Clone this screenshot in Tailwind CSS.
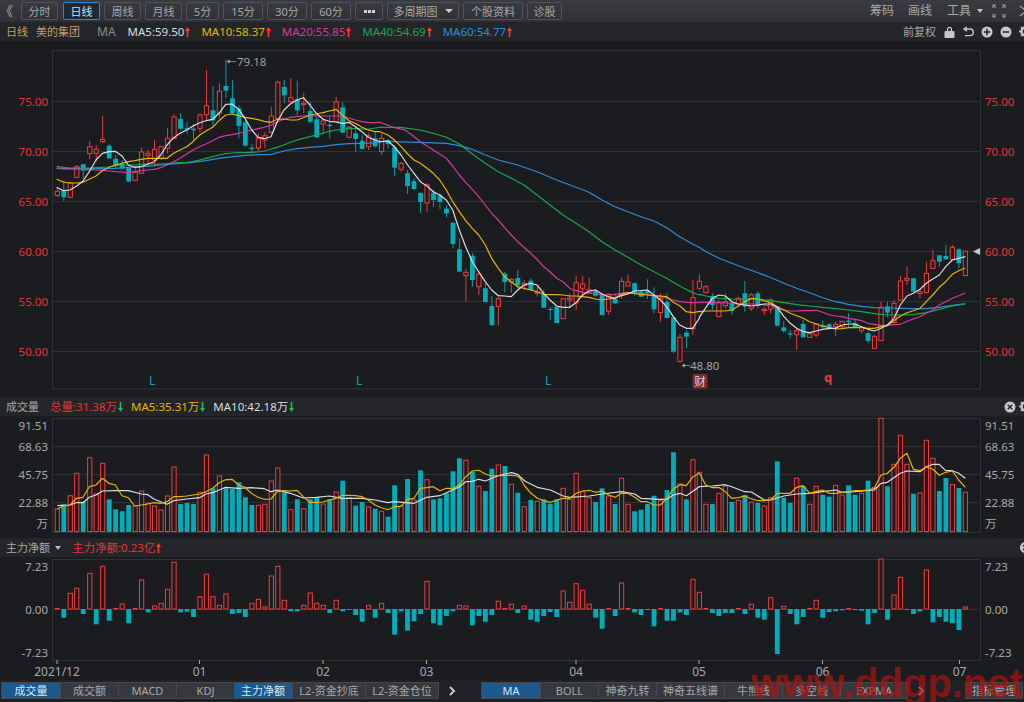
<!DOCTYPE html>
<html lang="zh">
<head>
<meta charset="utf-8">
<script src="https://cdn.jsdelivr.net/npm/@tailwindcss/browser@4"></script>
</head>
<body class="bg-[#1b1c20]">
<div class="relative w-[1024px] h-[702px] overflow-hidden flex flex-col bg-[#1b1c20] text-[#a8a8a8] text-[11px] leading-none font-['Noto_Sans','Noto_Sans_CJK_SC',sans-serif]">

  <!-- toolbar -->
  <div class="h-[22px] shrink-0 flex items-center justify-between bg-gradient-to-b from-[#3a3c41] to-[#2f3135] overflow-hidden">
    <div class="flex items-center">
      <span class="w-[21px] text-left text-[13px] text-[#b0b0b0]">《</span>
      <div class="flex gap-[4px]">
        <span class="w-[37px] h-[18px] flex items-center justify-center border border-[#505257] rounded-[2px]">分时</span>
        <span class="w-[37px] h-[18px] flex items-center justify-center border border-[#2b8ad6] rounded-[2px] bg-[#1d2a36] text-[#bfe0f8] ml-[1px]">日线</span>
        <span class="w-[37px] h-[18px] flex items-center justify-center border border-[#505257] rounded-[2px]">周线</span>
        <span class="w-[37px] h-[18px] flex items-center justify-center border border-[#505257] rounded-[2px]">月线</span>
        <span class="w-[33px] h-[18px] flex items-center justify-center border border-[#505257] rounded-[2px]">5分</span>
        <span class="w-[40px] h-[18px] flex items-center justify-center border border-[#505257] rounded-[2px]">15分</span>
        <span class="w-[40px] h-[18px] flex items-center justify-center border border-[#505257] rounded-[2px]">30分</span>
        <span class="w-[40px] h-[18px] flex items-center justify-center border border-[#505257] rounded-[2px]">60分</span>
        <span class="w-[28px] h-[18px] flex items-center justify-center gap-[1px] border border-[#505257] rounded-[2px]">
          <i class="w-[3px] h-[3px] bg-[#d0d0d0]"></i><i class="w-[3px] h-[3px] bg-[#d0d0d0]"></i><i class="w-[3px] h-[3px] bg-[#d0d0d0]"></i>
        </span>
        <span class="w-[72px] h-[18px] flex items-center justify-center gap-[7px] border border-[#505257] rounded-[2px]">多周期图
          <i class="w-0 h-0 border-x-[4px] border-x-transparent border-t-[4px] border-t-[#c8c8c8]"></i>
        </span>
        <span class="w-[60px] h-[18px] flex items-center justify-center border border-[#505257] rounded-[2px]">个股资料</span>
        <span class="w-[35px] h-[18px] flex items-center justify-center border border-[#505257] rounded-[2px]">诊股</span>
      </div>
    </div>
    <div class="flex items-center -mr-[7px] text-[12px]">
      <span>筹码</span>
      <span class="ml-[14px]">画线</span>
      <span class="ml-[15px]">工具</span>
      <i class="ml-[6px] w-0 h-0 border-x-[3.5px] border-x-transparent border-t-[4px] border-t-[#c0c0c0]"></i>
      <svg class="ml-[9px]" width="14" height="14" viewBox="0 0 14 14" fill="none" stroke="#a8a8a8" stroke-width="1"><path d="M1 4V1h3M1 1l3 3M13 4V1h-3M13 1l-3 3M1 10v3h3M1 13l3-3M13 10v3h-3M13 13l-3-3"/></svg>
      <svg class="ml-[13px]" width="12" height="14" viewBox="0 0 12 14" fill="none" stroke="#a8a8a8" stroke-width="1.2"><path d="M1 2l6 5-6 5M5 3l6 0"/></svg>
    </div>
  </div>

  <!-- legend row -->
  <div class="h-[19px] shrink-0 flex items-center justify-between bg-[#232529] overflow-hidden">
    <div class="flex items-center pl-[6px]">
      <span class="text-[#c39c68]">日线</span>
      <span class="ml-[8px] text-[#c39c68]">美的集团</span>
      <span class="ml-[17px] text-[12px] text-[#8c8c8c]">MA</span>
      <span class="ml-[12px] text-[11.5px] text-[#d6dde4]">MA5:59.50</span>
      <svg class="ml-[1px]" width="5" height="10" viewBox="0 0 5 10" fill="#ff3b30"><path d="M2.5 0L5 4H3.3V10H1.7V4H0z"/></svg>
      <span class="ml-[11px] text-[11.5px] text-[#e3b505]">MA10:58.37</span>
      <svg class="ml-[1px]" width="5" height="10" viewBox="0 0 5 10" fill="#ff3b30"><path d="M2.5 0L5 4H3.3V10H1.7V4H0z"/></svg>
      <span class="ml-[11px] text-[11.5px] text-[#d6389f]">MA20:55.85</span>
      <svg class="ml-[1px]" width="5" height="10" viewBox="0 0 5 10" fill="#ff3b30"><path d="M2.5 0L5 4H3.3V10H1.7V4H0z"/></svg>
      <span class="ml-[11px] text-[11.5px] text-[#16a84a]">MA40:54.69</span>
      <svg class="ml-[1px]" width="5" height="10" viewBox="0 0 5 10" fill="#ff3b30"><path d="M2.5 0L5 4H3.3V10H1.7V4H0z"/></svg>
      <span class="ml-[11px] text-[11.5px] text-[#2a8de0]">MA60:54.77</span>
      <svg class="ml-[1px]" width="5" height="10" viewBox="0 0 5 10" fill="#ff3b30"><path d="M2.5 0L5 4H3.3V10H1.7V4H0z"/></svg>
    </div>
    <div class="flex items-center -mr-[8px]">
      <span>前复权</span>
      <svg class="ml-[8px]" width="11" height="12" viewBox="0 0 11 12" fill="#c8c8c8"><path d="M3 5V3.2a2.5 2.5 0 0 1 5 0V5H6.8V3.2a1.3 1.3 0 0 0-2.6 0V5z"/><rect x="0.5" y="5" width="10" height="7" rx="1"/></svg>
      <svg class="ml-[8px]" width="11" height="11" viewBox="0 0 11 11" fill="none" stroke="#c8c8c8" stroke-width="1.4"><path d="M4 1L1 3l3 2.2M1.4 3H7a3 3 0 0 1 0 6.6H2"/></svg>
      <svg class="ml-[7px]" width="12" height="12" viewBox="0 0 12 12"><circle cx="6" cy="6" r="5.5" fill="#c8c8c8"/><path d="M2.8 6h6.4M6 2.8v6.4" stroke="#232529" stroke-width="1.5"/></svg>
      <svg class="ml-[7px]" width="12" height="12" viewBox="0 0 12 12"><circle cx="6" cy="6" r="5.5" fill="#c8c8c8"/><path d="M2.8 6h6.4" stroke="#232529" stroke-width="1.5"/></svg>
      <svg class="ml-[7px]" width="13" height="13" viewBox="0 0 13 13"><circle cx="6.5" cy="6.5" r="4" fill="none" stroke="#c8c8c8" stroke-width="2.4"/><path d="M6.5 0v13M0 6.5h13M2 2l9 9M11 2l-9 9" stroke="#c8c8c8" stroke-width="1.6" stroke-dasharray="2 9"/></svg>
    </div>
  </div>

  <!-- main chart -->
  <svg id="main" class="block shrink-0" width="1024" height="356" viewBox="0 41 1024 356" font-size="11.5">
    <rect x="52.5" y="50.5" width="928" height="338.5" fill="none" stroke="#303236"/>
    <g stroke="#2f3135"><path d="M53 101.5H980M53 151.5H980M53 201.5H980M53 251.5H980M53 301.5H980M53 351.5H980"/></g>
    <g id="candles"></g>
    <g id="malines" fill="none" stroke-width="1.2" stroke-linejoin="round"></g>
    <g fill="#e53535" text-anchor="end">
      <text x="48" y="106">75.00</text><text x="48" y="156">70.00</text><text x="48" y="206">65.00</text><text x="48" y="256">60.00</text><text x="48" y="306">55.00</text><text x="48" y="356">50.00</text>
    </g>
    <g fill="#e53535">
      <text x="985" y="106">75.00</text><text x="985" y="156">70.00</text><text x="985" y="206">65.00</text><text x="985" y="256">60.00</text><text x="985" y="306">55.00</text><text x="985" y="356">50.00</text>
    </g>
    <path d="M227 61.5H236M227 61.5l2.5-1.5v3z" stroke="#9a9a9a" fill="#9a9a9a" stroke-width="0.8"/>
    <text x="237" y="66" fill="#a0a0a0">79.18</text>
    <path d="M682 365.5H690M682 365.5l2.5-1.5v3z" stroke="#9a9a9a" fill="#9a9a9a" stroke-width="0.8"/>
    <text x="690" y="370" fill="#a0a0a0">48.80</text>
    <g fill="#10a3ad" font-size="12"><text x="149" y="385">L</text><text x="356" y="385">L</text><text x="545" y="385">L</text></g>
    <rect x="692.5" y="374" width="15" height="14.5" rx="2" fill="#7c2d2d"/>
    <text x="700" y="385.5" text-anchor="middle" fill="#e6cccc" font-size="11.5">财</text>
    <text x="828" y="382" text-anchor="middle" fill="#f03a3a" font-size="13" font-weight="700">q</text>
    <path d="M973 251.5l7-3.5v7z" fill="#c8c8c8"/>
  </svg>

  <!-- volume header -->
  <div class="h-[19px] shrink-0 flex items-center justify-between bg-[#232529] overflow-hidden">
    <div class="flex items-center pl-[6px]">
      <span>成交量</span>
      <span class="ml-[11px] text-[11.5px] text-[#e53535]">总量:31.38万</span>
      <svg class="ml-[1px]" width="5" height="10" viewBox="0 0 5 10" fill="#18c050"><path d="M2.5 10L5 6H3.3V0H1.7V6H0z"/></svg>
      <span class="ml-[8px] text-[11.5px] text-[#e3b505]">MA5:35.31万</span>
      <svg class="ml-[1px]" width="5" height="10" viewBox="0 0 5 10" fill="#18c050"><path d="M2.5 10L5 6H3.3V0H1.7V6H0z"/></svg>
      <span class="ml-[8px] text-[11.5px] text-[#d6dde4]">MA10:42.18万</span>
      <svg class="ml-[1px]" width="5" height="10" viewBox="0 0 5 10" fill="#18c050"><path d="M2.5 10L5 6H3.3V0H1.7V6H0z"/></svg>
    </div>
    <div class="flex items-center -mr-[8px]">
      <svg width="12" height="12" viewBox="0 0 12 12"><circle cx="6" cy="6" r="5.5" fill="#c8c8c8"/><path d="M3.7 3.7l4.6 4.6M8.3 3.7l-4.6 4.6" stroke="#232529" stroke-width="1.4"/></svg>
      <svg class="ml-[3px]" width="13" height="13" viewBox="0 0 13 13"><circle cx="6.5" cy="6.5" r="4" fill="none" stroke="#c8c8c8" stroke-width="2.4"/><path d="M6.5 0v13M0 6.5h13M2 2l9 9M11 2l-9 9" stroke="#c8c8c8" stroke-width="1.6" stroke-dasharray="2 9"/></svg>
    </div>
  </div>

  <!-- volume chart -->
  <svg id="vol" class="block shrink-0" width="1024" height="122" viewBox="0 416 1024 122" font-size="11.5">
    <rect x="52.5" y="418.5" width="928" height="114" fill="none" stroke="#303236"/>
    <g stroke="#2f3135"><path d="M53 446.5H980M53 474.5H980M53 502.5H980"/></g>
    <g id="volbars"></g>
    <g id="vollines" fill="none" stroke-width="1.2" stroke-linejoin="round"></g>
    <g fill="#a8a8a8" text-anchor="end">
      <text x="48" y="430">91.51</text><text x="48" y="451">68.63</text><text x="48" y="479">45.75</text><text x="48" y="507">22.88</text><text x="48" y="528">万</text>
    </g>
    <g fill="#a8a8a8">
      <text x="985" y="430">91.51</text><text x="985" y="451">68.63</text><text x="985" y="479">45.75</text><text x="985" y="507">22.88</text><text x="985" y="528">万</text>
    </g>
  </svg>

  <!-- flow header -->
  <div class="h-[19px] shrink-0 flex items-center justify-between bg-[#232529] overflow-hidden">
    <div class="flex items-center pl-[6px]">
      <span>主力净额</span>
      <i class="ml-[5px] w-0 h-0 border-x-[3.5px] border-x-transparent border-t-[4px] border-t-[#c0c0c0]"></i>
      <span class="ml-[11px] text-[11.5px] text-[#e53535]">主力净额:0.23亿</span>
      <svg class="ml-[1px]" width="5" height="10" viewBox="0 0 5 10" fill="#ff3b30"><path d="M2.5 0L5 4H3.3V10H1.7V4H0z"/></svg>
    </div>
    <div class="flex items-center -mr-[8px]">
      <svg width="13" height="13" viewBox="0 0 13 13"><circle cx="6.5" cy="6.5" r="5.5" fill="#c8c8c8"/><path d="M4 4l5 5M9 4l-5 5" stroke="#232529" stroke-width="1.4"/></svg>
    </div>
  </div>

  <!-- flow chart with date axis -->
  <svg id="flow" class="block shrink-0" width="1024" height="123" viewBox="0 557 1024 123" font-size="11.5">
    <rect x="52.5" y="559.5" width="928" height="101" fill="none" stroke="#303236"/>
    <path d="M53 609.5H980" stroke="#2f3135"/>
    <g id="flowbars"></g>
    <g fill="#a8a8a8" text-anchor="end">
      <text x="48" y="570.5">7.23</text><text x="48" y="613.5">0.00</text><text x="48" y="656.5">-7.23</text>
    </g>
    <g fill="#a8a8a8">
      <text x="985" y="570.5">7.23</text><text x="985" y="613.5">0.00</text><text x="985" y="656.5">-7.23</text>
    </g>
    <g stroke="#a8a8a8"><path d="M57 660v4M199.5 660v4M323 660v4M426.5 660v4M576 660v4M699 660v4M822.5 660v4M959.5 660v4"/></g>
    <g fill="#a8a8a8" text-anchor="middle" font-size="12">
      <text x="57" y="676">2021/12</text><text x="199.5" y="676">01</text><text x="323" y="676">02</text><text x="426.5" y="676">03</text><text x="576" y="676">04</text><text x="699" y="676">05</text><text x="822.5" y="676">06</text><text x="959.5" y="676">07</text>
    </g>
  </svg>

  <!-- tabs -->
  <div class="h-[22px] shrink-0 flex items-start pt-[2px] bg-[#1f2125] text-[11px]">
    <div class="flex ml-[1px] h-[17px] border border-[#45474b]">
      <span class="w-[58px] flex items-center justify-center bg-[#1b5a8e] text-[#d8e8f4]">成交量</span>
      <span class="w-[58px] flex items-center justify-center bg-[#36383d] border-l border-[#45474b]">成交额</span>
      <span class="w-[58px] flex items-center justify-center bg-[#36383d] border-l border-[#45474b]">MACD</span>
      <span class="w-[58px] flex items-center justify-center bg-[#36383d] border-l border-[#45474b]">KDJ</span>
      <span class="w-[58px] flex items-center justify-center bg-[#1b5a8e] text-[#d8e8f4]">主力净额</span>
      <span class="w-[73px] flex items-center justify-center bg-[#36383d] border-l border-[#45474b]">L2-资金抄底</span>
      <span class="w-[73px] flex items-center justify-center bg-[#36383d] border-l border-[#45474b]">L2-资金仓位</span>
    </div>
    <svg class="ml-[10px] mt-[4px]" width="7" height="10" viewBox="0 0 7 10" fill="none" stroke="#c8c8c8" stroke-width="2"><path d="M1 1l4 4-4 4"/></svg>
    <div class="flex ml-[25px] h-[17px] border border-[#45474b]">
      <span class="w-[58px] flex items-center justify-center bg-[#1b5a8e] text-[#d8e8f4]">MA</span>
      <span class="w-[58px] flex items-center justify-center bg-[#36383d] border-l border-[#45474b]">BOLL</span>
      <span class="w-[58px] flex items-center justify-center bg-[#36383d] border-l border-[#45474b]">神奇九转</span>
      <span class="w-[68px] flex items-center justify-center bg-[#36383d] border-l border-[#45474b]">神奇五线谱</span>
      <span class="w-[58px] flex items-center justify-center bg-[#36383d] border-l border-[#45474b]">牛熊线</span>
      <span class="w-[58px] flex items-center justify-center bg-[#36383d] border-l border-[#45474b]">多空线</span>
      <span class="w-[67px] flex items-center justify-center bg-[#36383d] border-l border-[#45474b]">EXPMA</span>
    </div>
    <svg class="ml-[10px] mt-[4px]" width="7" height="10" viewBox="0 0 7 10" fill="none" stroke="#c8c8c8" stroke-width="2"><path d="M1 1l4 4-4 4"/></svg>
    <span class="ml-[40px] w-[58px] h-[17px] flex items-center justify-center border border-[#45474b] bg-[#36383d] shrink-0">指标管理</span>
  </div>

  <!-- watermark -->
  <span class="absolute left-[751px] top-[659px] text-[40px] leading-[48px] font-bold whitespace-nowrap font-['Liberation_Sans',sans-serif] text-[#b01212]/70">www.ddgp.net</span>
</div>

<script>
var X=function(i){return 57.3+6.486*i};
var RED='#f23c3c',TEAL='#00adb8',BG='#1b1c20';
var parse=function(s){return s.trim().split(/\s+/).map(Number)};

/* candles: red?, high, bodyTop, bodyBottom, low (3x crop coordinates) */
var c6='1 412 424 437 441|0 392 420 442 453|1 395 400 442 442|1 345 350 382 382|0 342 343 362 385|1 273 290 311 328|1 285 298 310 335|1 198 268 275 278|0 283 287 325 327|0 315 326 347 355|0 330 342 355 358|0 350 352 395 396|1 347 367 391 392|1 293 306 370 370|1 300 310 316 350|1 270 298 330 345|1 288 290 325 330|1 235 265 295 310|1 193 201 265 266|0 190 207 236 241|0 215 235 239 252|0 222 236 241 272|1 190 195 235 247|1 60 167 194 210|0 108 181 211 230|1 100 124 190 205|0 28 108 122 145|0 90 145 190 192|0 165 175 228 265|0 205 217 287 289|0 283 293 297 310|1 250 264 294 303|1 247 257 270 295|1 170 198 247 250|1 92 97 205 210|0 90 111 136 160|1 84 143 155 160|0 92 148 181 196|1 128 160 164 190|0 155 183 215 220|0 197 208 262 264|1 205 213 222 250|0 200 224 228 265|1 141 156 215 215|0 156 172 248 250|1 227 232 262 265|0 240 250 267 305|0 255 272 297 298|1 250 258 290 300|0 245 265 289 292';
var c7='1 12 25 65 75|0 28 30 42 55|0 45 52 113 138|1 95 100 118 125|0 120 130 168 192|0 145 153 177 180|0 187 189 216 250|1 160 164 219 245|0 180 188 210 230|0 190 196 216 237|0 225 236 250 262|0 277 278 342 355|0 325 358 425 426|1 415 427 437 515|0 370 377 450 470|1 425 432 470 495|0 460 475 516 517|0 498 528 586 587|1 500 506 530 586|0 425 431 456 487|1 444 448 456 488|0 420 444 465 475|1 450 460 467 480|0 445 452 480 482|1 470 486 490 500|0 480 492 533 534|0 530 537 540 570|0 527 530 579 580|1 505 506 566 566|1 490 505 510 530|1 437 458 518 540|1 438 462 475 500|1 442 480 490 490|0 478 482 497 500|0 488 495 555 556|1 490 493 544 555|0 490 507 520 522|1 442 454 495 507|1 435 456 468 468|0 458 460 490 497|0 480 485 500 501|0 448 480 490 507|0 472 498 538 550|1 490 505 548 575|0 490 516 564 565|0 560 562 665 670|1 612 622 694 698|0 600 608 620 655';
var c8='1 150 203 297 315|1 133 154 175 180|1 165 170 188 190|0 190 198 225 240|1 210 217 260 262|1 190 215 227 235|0 215 220 243 255|1 200 205 222 225|0 153 190 230 245|1 190 194 235 243|0 184 190 228 235|1 230 238 242 255|1 205 210 237 250|0 228 230 287 290|0 272 292 303 308|0 300 310 314 325|1 295 302 314 360|0 270 282 322 323|1 306 311 322 323|1 280 282 315 322|0 272 285 292 297|0 280 283 292 300|1 275 283 290 318|1 272 274 290 295|0 250 272 276 292|0 270 280 292 295|1 290 293 302 310|0 305 310 333 340|1 315 320 355 357|1 215 232 332 332|0 215 229 248 262|1 210 220 278 280|1 137 153 210 210|1 110 145 151 165|0 143 145 185 187|1 180 185 190 205|1 95 130 188 190|1 60 92 115 116|0 75 76 95 110|0 45 78 88 90|1 45 52 88 90|0 55 58 100 115|1 62 64 137 138';
var cs=[[c6,50],[c7,130],[c8,230]],out='',idx=0;
cs.forEach(function(z){z[0].split('|').forEach(function(r){
  var v=parse(r),o=z[1],x=X(idx),red=v[0]==1;
  var h=o+v[1]/3,t=o+v[2]/3,b=o+v[3]/3,l=o+v[4]/3;
  var wick=red?'#e83a3a':'#0a9aa4',cx=x.toFixed(2);
  out+='<path d="M'+cx+' '+h.toFixed(1)+'V'+l.toFixed(1)+'" stroke="'+wick+'"/>';
  if(red) out+='<rect x="'+(x-2.1).toFixed(2)+'" y="'+t.toFixed(1)+'" width="4.2" height="'+Math.max(1,b-t).toFixed(1)+'" fill="'+BG+'" stroke="'+RED+'"/>';
  else out+='<rect x="'+(x-2.4).toFixed(2)+'" y="'+t.toFixed(1)+'" width="4.8" height="'+Math.max(1,(b-t)).toFixed(1)+'" fill="'+TEAL+'"/>';
  idx++;
});});
document.getElementById('candles').innerHTML=out;

/* polylines stitched from three crops */
function stitch(parts){
  var pts=[],last=-1;
  parts.forEach(function(p){var a=parse(p[2]);
    for(var k=0;k<a.length;k+=2){var x=p[0]+a[k]/3,y=p[1]+a[k+1]/3;
      if(x>last+.2){pts.push(x.toFixed(1)+','+y.toFixed(1));last=x;}}
  });
  return pts.join(' ');
}
var ma=[
['#2a8de0',[[40,50,'50 354 70 356 90 356 110 355 129 356 148 356 187 356 226 355 265 352 304 350 343 347 381 343 420 340 459 337 498 332 537 325 576 320 615 316 654 314 693 313 732 303 771 296 810 292 849 289 888 284 927 281 966 280 1020 278'],
 [380,130,'1 35 40 35 120 37 199 40 238 47 277 58 316 75 355 90 413 105 471 125 530 150 588 172 627 187 666 210 705 230 744 245 783 260 822 273 860 293 899 320 938 342 960 353'],
 [690,230,'0 40 48 65 87 85 126 100 165 115 204 128 243 143 282 160 320 175 359 188 398 203 437 215 476 223 515 229 553 233 592 234 631 235 670 236 709 236 748 232 787 226 826 221']]],
['#16a84a',[[40,50,'50 349 70 352 90 354 110 354 129 354 148 354 168 353 187 352 207 351 226 348 246 345 265 345 284 345 304 343 323 342 343 342 362 342 381 341 401 339 420 338 440 337 459 335 479 330 498 325 518 320 537 315 557 311 576 309 596 308 615 308 635 307 654 306 673 303 693 297 712 292 732 285 751 277 771 270 790 265 810 260 829 255 849 250 868 244 888 240 907 238 927 236 946 236 966 237 985 238 1005 234 1020 232'],
 [380,130,'0 -9 60 -8 120 0 160 10 199 22 238 42 277 72 316 100 355 125 394 145 432 165 471 195 510 225 549 255 588 280 627 305 666 335 705 360 744 382 783 405 822 425 860 445 899 468 938 488 958 495'],
 [690,230,'0 185 29 193 48 198 87 205 126 207 165 208 204 207 243 212 282 218 320 224 359 228 398 232 437 236 476 240 515 245 553 251 592 255 631 255 670 254 709 248 748 238 787 228 826 222']]],
['#d6389f',[[40,50,'50 355 70 357 90 357 110 357 129 358 148 359 168 360 187 361 207 363 226 365 246 366 265 368 284 365 304 362 323 360 343 358 362 353 381 345 401 335 420 325 440 312 459 300 479 290 498 282 518 272 537 262 557 257 576 254 596 250 615 244 635 240 654 236 673 232 693 226 712 215 732 208 751 202 771 200 790 198 810 197 829 198 849 198 868 198 888 198 907 198 927 204 946 210 966 215 985 218 1005 218 1020 217'],
 [380,130,'40 -8 75 0 100 18 121 35 160 60 199 85 218 108 238 135 257 157 277 178 296 200 316 225 335 250 355 270 374 293 394 315 413 335 432 352 452 370 471 388 491 410 510 425 530 445 549 455 569 475 588 482 608 487 627 488 646 490 666 495 685 495 705 493 724 490 744 488 763 490 783 490 802 493 822 497 841 500 860 503 880 510 899 515 919 517 938 518 958 517'],
 [690,230,'0 215 29 216 48 217 67 217 87 218 106 219 126 220 145 222 165 222 184 222 204 222 223 225 243 228 262 235 282 240 301 243 320 243 340 242 359 242 379 241 398 247 418 255 437 258 456 260 476 265 495 268 515 272 534 280 553 283 573 286 592 286 612 284 631 283 651 274 670 267 690 260 709 250 728 240 748 225 767 215 787 205 806 197 826 189']]],
['#e3b505',[[40,50,'50 388 70 396 90 399 110 399 129 397 148 388 168 378 187 362 207 352 226 345 246 340 265 335 284 332 304 328 323 325 343 325 362 325 381 325 401 310 420 300 440 290 459 275 479 255 498 243 518 232 537 212 557 195 576 192 596 197 615 202 635 205 654 209 673 214 693 217 712 208 732 207 751 210 771 210 790 203 810 195 829 192 849 188 868 183 888 178 907 195 927 212 946 220 966 232 985 240 1005 245 1020 245'],
 [380,130,'0 5 24 15 43 30 63 50 83 72 102 90 121 100 141 115 160 130 179 150 199 180 218 215 238 245 257 272 277 295 296 315 316 345 335 385 355 415 374 440 394 455 413 470 432 475 452 480 471 485 491 493 510 494 530 494 549 495 569 498 588 498 608 500 627 502 646 507 666 510 685 507 705 505 724 492 744 488 763 490 783 493 802 495 822 497 841 498 860 500 880 517 899 527 919 545 938 548 958 544'],
 [690,230,'0 247 29 245 48 243 67 243 87 243 106 243 126 240 145 228 165 215 184 205 204 207 223 213 243 218 262 230 282 240 301 250 320 257 340 265 359 275 379 282 398 288 418 293 437 297 456 296 476 293 495 292 515 293 534 295 553 295 573 290 592 287 612 272 631 258 651 248 670 242 690 235 709 215 728 195 748 172 767 155 787 133 806 122 826 114']]],
['#dcdcdc',[[40,50,'50 412 70 422 90 420 110 408 129 393 148 365 168 330 187 310 207 305 226 304 246 318 265 345 284 352 304 350 323 342 343 335 362 315 381 285 401 263 420 250 440 240 459 228 479 218 498 212 518 208 537 190 557 163 576 162 596 178 615 205 635 240 654 262 673 266 693 260 712 215 732 180 751 162 771 150 790 143 810 165 829 190 849 208 868 214 888 216 907 220 927 217 946 230 966 245 985 262 1005 270 1020 275'],
 [380,130,'0 30 24 33 43 50 63 75 83 105 102 130 121 155 141 168 160 185 179 195 199 210 218 240 238 300 257 350 277 395 296 425 316 455 335 480 355 497 374 498 394 500 413 480 432 465 452 460 471 465 491 490 510 510 530 528 549 532 569 532 588 518 608 495 627 483 646 480 666 492 685 500 705 505 724 497 744 492 763 483 783 482 802 480 822 495 841 510 860 530 880 560 899 585 919 595 938 595 958 565'],
 [690,230,'0 295 9 292 29 260 48 232 67 205 87 195 106 198 126 215 145 222 165 225 184 228 204 225 223 222 243 222 262 232 282 260 301 280 320 295 340 305 359 308 379 303 398 298 418 295 437 295 456 285 476 282 495 282 515 290 534 298 553 303 573 295 592 285 612 265 631 225 651 198 670 190 690 178 709 160 728 147 748 135 767 110 787 90 806 85 826 80']]]
];
document.getElementById('malines').innerHTML=ma.map(function(m){return '<polyline stroke="'+m[0]+'" points="'+stitch(m[1])+'"/>'}).join('');

/* volume bars: red?, top (3x, y=410+t/3) */
var vol='1 297|0 283|1 257|1 190|0 275|1 143|1 252|1 160|0 268|0 298|0 304|0 285|1 288|1 243|1 280|1 288|1 300|1 258|1 171|0 282|0 279|0 282|1 247|1 135|0 235|1 198|0 232|0 237|0 217|0 262|0 285|1 286|1 283|1 213|1 174|0 247|1 299|0 268|1 296|0 268|0 262|1 282|0 268|1 246|0 212|1 263|0 287|0 276|1 291|0 296|1 304|0 320|0 226|1 288|0 207|1 270|0 181|1 209|0 268|0 265|0 250|0 184|0 145|1 151|0 185|1 229|0 243|0 176|1 165|0 168|1 223|0 248|1 290|0 270|1 274|0 268|0 281|0 268|1 235|1 268|1 190|1 245|1 263|0 276|0 235|1 258|0 282|1 205|1 283|0 304|0 299|0 282|0 257|1 272|0 240|0 127|1 222|0 268|1 149|1 187|1 283|0 282|1 250|1 228|0 276|1 271|0 255|1 277|0 279|1 288|1 263|0 154|0 263|0 279|1 205|0 228|1 283|1 229|0 254|0 260|1 226|1 255|0 226|0 254|1 250|0 212|1 232|1 25|0 229|1 163|1 76|1 163|0 251|1 249|1 91|1 145|0 243|0 204|1 224|0 234|1 247';
var vout='';
vol.split('|').forEach(function(r,i){var v=parse(r),t=410+v[1]/3,base=531.5,x=X(i);
  if(v[0]==1) vout+='<rect x="'+(x-2.1).toFixed(2)+'" y="'+t.toFixed(1)+'" width="4.2" height="'+(base-t).toFixed(1)+'" fill="'+BG+'" stroke="'+RED+'"/>';
  else vout+='<rect x="'+(x-2.4).toFixed(2)+'" y="'+t.toFixed(1)+'" width="4.8" height="'+(base-t+.5).toFixed(1)+'" fill="'+TEAL+'"/>';
});
document.getElementById('volbars').innerHTML=vout;
var vl=[
['#dcdcdc',[[40,410,'52 287 90 285 109 278 129 278 148 262 168 255 187 243 226 242 265 242 304 252 323 254 343 268 381 283 401 272 440 267 479 263 498 252 518 248 557 232 596 235 634 233 673 236 693 245 712 240 751 250 790 264 829 262 868 258 907 265 966 265 1005 270 1044 278 1063 275 1122 280 1160 262 1199 257 1238 240 1258 230 1277 215 1297 214 1316 208 1336 213 1375 197 1414 188 1433 193 1440 200'],
 [520,410,'0 200 14 213 52 232 91 240 130 258 149 262 208 258 246 252 305 245 344 252 363 265 421 268 441 268 460 255 480 250 499 257 538 230 577 228 616 224 635 230 674 245 694 246 733 270 752 270 791 258 830 252 869 250 908 245 947 240 966 247 1005 245 1063 240 1083 220 1102 217 1141 190 1161 183 1200 185 1219 170 1239 163 1258 163 1277 182 1297 182 1316 190 1336 205']]],
['#e3b505',[[40,410,'52 297 70 288 90 285 109 265 129 262 148 230 168 225 187 205 207 220 226 225 246 257 265 263 284 288 304 285 323 282 343 278 362 280 381 275 401 260 420 260 440 258 459 255 479 252 498 245 518 235 537 218 557 209 576 208 596 225 615 232 634 250 654 262 673 268 693 267 712 245 732 242 751 243 771 241 790 260 810 277 829 277 849 276 868 270 888 265 907 256 927 256 946 257 966 260 985 270 1005 285 1024 293 1044 299 1063 290 1083 289 1102 268 1122 265 1141 235 1160 233 1180 230 1199 242 1219 235 1238 236 1258 225 1277 200 1297 183 1316 181 1336 192 1355 198 1375 197 1394 196 1414 196 1433 198 1440 205'],
 [520,410,'0 205 14 228 33 250 52 265 72 272 91 277 111 270 130 265 149 265 169 250 188 243 208 241 227 247 246 243 266 255 285 262 305 250 324 250 344 262 363 275 382 275 402 285 421 285 441 265 460 237 480 224 499 227 519 200 538 190 557 225 577 233 596 232 616 245 635 265 655 263 674 258 694 266 713 272 733 272 752 270 772 250 791 250 811 250 830 232 849 227 869 250 888 245 908 240 927 250 947 250 966 247 986 245 1005 242 1025 242 1044 240 1063 235 1083 195 1102 190 1122 172 1141 145 1161 130 1180 178 1200 182 1219 170 1239 178 1258 196 1277 187 1297 183 1316 210 1336 232']]]
];
document.getElementById('vollines').innerHTML=vl.map(function(m){return '<polyline stroke="'+m[0]+'" points="'+stitch(m[1])+'"/>'}).join('');

/* net flow bars: red?, tip (3x, y=540+t/3) */
var flow='1 204|0 233|1 160|1 145|0 222|1 100|0 253|1 79|0 242|1 202|1 192|0 250|1 204|1 120|0 217|1 198|1 190|1 148|1 67|0 217|0 215|0 231|1 170|1 103|1 170|1 196|1 162|0 222|0 219|0 231|1 190|1 178|1 201|1 108|1 79|1 181|0 214|0 214|1 196|1 159|1 190|1 196|0 219|1 181|0 214|0 208|0 225|0 245|1 196|0 233|1 190|0 219|0 284|0 214|0 272|0 244|0 222|1 124|0 250|0 256|0 228|0 214|1 196|1 198|0 256|0 228|0 245|0 225|1 184|1 207|1 193|0 219|1 198|0 239|0 245|0 228|0 216|0 231|1 153|1 187|1 131|1 151|1 193|0 233|0 266|1 204|0 228|1 129|1 204|0 217|0 225|0 210|0 259|1 204|0 242|0 242|0 217|0 225|1 118|1 157|1 204|0 219|0 228|0 219|0 219|1 204|0 222|1 193|0 233|0 239|1 173|0 342|1 199|0 222|0 253|0 231|1 204|1 181|0 233|0 216|0 214|0 211|1 207|0 210|0 212|0 253|0 219|1 57|0 239|1 165|1 112|0 207|0 222|0 214|1 90|0 247|0 231|0 245|0 250|0 270|1 201';
var fout='';
flow.split('|').forEach(function(r,i){var v=parse(r),t=540+v[1]/3,base=609,x=X(i);
  if(v[0]==1){
    if(base-t<2) fout+='<rect x="'+(x-2.4).toFixed(2)+'" y="608" width="4.8" height="1.5" fill="'+RED+'"/>';
    else fout+='<rect x="'+(x-2.1).toFixed(2)+'" y="'+t.toFixed(1)+'" width="4.2" height="'+(base-t).toFixed(1)+'" fill="'+BG+'" stroke="'+RED+'"/>';
  } else fout+='<rect x="'+(x-2.4).toFixed(2)+'" y="609" width="4.8" height="'+Math.max(1,t-609).toFixed(1)+'" fill="'+TEAL+'"/>';
});
document.getElementById('flowbars').innerHTML=fout;
</script>
</body>
</html>
